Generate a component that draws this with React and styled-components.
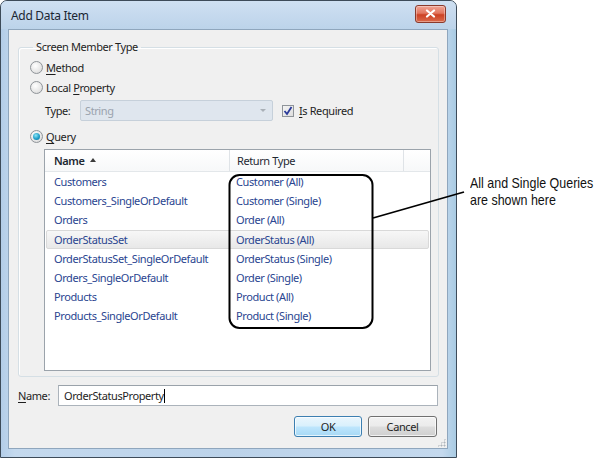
import React from "react";
import styled, { createGlobalStyle } from "styled-components";

const GlobalStyle = createGlobalStyle`
  html, body {
    margin: 0;
    padding: 0;
    background: #ffffff;
  }
  body {
    font-family: "Noto Sans", "Open Sans", sans-serif;
    letter-spacing: -0.3px;
  }
`;

const Page = styled.div`
  position: relative;
  display: flex;
  align-items: flex-start;
  width: 600px;
  height: 458px;
  overflow: hidden;
  background: #ffffff;
`;

const Window = styled.div`
  display: flex;
  flex-direction: column;
  width: 459px;
  height: 458px;
  box-sizing: border-box;
  border: 1px solid #3d4b59;
  border-radius: 7px 7px 0 0;
  background: linear-gradient(90deg, #b3cde8 0%, #c4d9ee 3%, #bcd3ea 50%, #c4d9ee 97%, #a9cbe3 100%);
  padding: 0 8px 8px 7px;
`;

const TitleBar = styled.div`
  display: flex;
  align-items: center;
  justify-content: space-between;
  height: 28px;
  margin: 0 -8px 0 -7px;
  padding: 0 10px;
  background: linear-gradient(#cfe0f2, #bcd3ea);
  border-radius: 6px 6px 0 0;
`;

const Title = styled.span`
  font-size: 12px;
  color: #1b2633;
`;

const CloseButton = styled.div`
  display: flex;
  align-items: center;
  justify-content: center;
  width: 29px;
  height: 16px;
  margin-top: -3px;
  border: 1px solid #8a3a2c;
  border-radius: 3px;
  background: linear-gradient(#f0a596 0%, #e2765f 45%, #cc4124 55%, #db6a4c 100%);
  box-shadow: inset 0 0 0 1px rgba(255, 255, 255, 0.35);
`;

const Client = styled.div`
  flex: 1;
  display: flex;
  flex-direction: column;
  background: #f0f0f0;
  border: 1px solid #8fa6bd;
  padding: 10px 8px 0 9px;
  font-size: 11px;
  letter-spacing: -0.4px;
`;

const Group = styled.fieldset`
  margin: 0;
  padding: 3px 7px 5px 11px;
  border: 1px solid #d5dfe5;
  border-radius: 3px;
  box-shadow: inset 1px 1px 0 #ffffff;
`;

const Legend = styled.legend`
  margin-left: 3px;
  padding: 0 3px;
  line-height: 14px;
  color: #1e1e1e;
`;

const OptionRow = styled.label`
  display: flex;
  align-items: center;
  gap: 3px;
  height: 20px;
  margin-top: ${(p) => p.$top || 0}px;
  color: #1e1e1e;
`;

const Radio = styled.span`
  position: relative;
  width: 11px;
  height: 11px;
  border-radius: 50%;
  border: 1px solid #8f9499;
  background: radial-gradient(circle at 40% 35%, #ffffff 0%, #e6e6e6 60%, #cfcfcf 100%);
  flex: none;
  &::after {
    content: "";
    display: ${(p) => (p.$checked ? "block" : "none")};
    position: absolute;
    left: 2px;
    top: 2px;
    width: 7px;
    height: 7px;
    border-radius: 50%;
    background: radial-gradient(circle at 40% 35%, #8ee6f6 0%, #1f9ec8 55%, #0b6c98 100%);
  }
`;

const Key = styled.span`
  text-decoration: underline;
  text-underline-offset: 2px;
`;

const TypeRow = styled.div`
  display: flex;
  align-items: center;
  height: 21px;
  margin: 3px 0 0 15px;
  color: #1e1e1e;
`;

const TypeLabel = styled.span`
  width: 35px;
`;

const Combo = styled.div`
  display: flex;
  align-items: center;
  justify-content: space-between;
  box-sizing: border-box;
  width: 193px;
  height: 21px;
  padding: 0 6px 0 4px;
  border: 1px solid #c6d0da;
  border-radius: 2px;
  background: #dfe6ee;
  color: #9aa3ad;
`;

const ComboArrow = styled.span`
  width: 0;
  height: 0;
  border-left: 3px solid transparent;
  border-right: 3px solid transparent;
  border-top: 3px solid #a9b0b7;
`;

const CheckRow = styled.label`
  display: flex;
  align-items: center;
  gap: 5px;
  margin-left: 9px;
`;

const CheckBox = styled.span`
  display: flex;
  align-items: center;
  justify-content: center;
  box-sizing: border-box;
  width: 12px;
  height: 12px;
  border: 1px solid #8f9499;
  background: linear-gradient(135deg, #f4f4f4, #dedede);
`;

const List = styled.div`
  display: flex;
  flex-direction: column;
  margin: 3px 0 0 14px;
  height: 222px;
  box-sizing: border-box;
  border: 1px solid #9ba3ab;
  background: #ffffff;
`;

const Header = styled.div`
  display: flex;
  height: 21px;
  border-bottom: 1px solid #e3e7ea;
  background: linear-gradient(#ffffff, #f7f8f9);
`;

const HeadCell = styled.div`
  display: flex;
  align-items: center;
  gap: 5px;
  box-sizing: border-box;
  width: ${(p) => p.$w}px;
  padding-left: ${(p) => p.$pad || 0}px;
  border-right: ${(p) => (p.$last ? "none" : "1px solid #dfe3e7")};
  font-weight: ${(p) => (p.$bold ? 600 : 400)};
  color: #1e2832;
`;

const SortArrow = styled.span`
  width: 0;
  height: 0;
  border-left: 3px solid transparent;
  border-right: 3px solid transparent;
  border-bottom: 4px solid #3c3c3c;
  margin-top: -1px;
`;

const Rows = styled.div`
  display: flex;
  flex-direction: column;
  padding: 0 1px;
`;

const Row = styled.div`
  display: flex;
  align-items: center;
  box-sizing: border-box;
  height: 19.2px;
  border: 1px solid ${(p) => (p.$selected ? "#d9d9d9" : "transparent")};
  border-radius: 2px;
  background: ${(p) => (p.$selected ? "linear-gradient(#f7f7f7, #e8e8e8)" : "transparent")};
  color: #2a4590;
`;

const Cell = styled.span`
  box-sizing: border-box;
  width: ${(p) => p.$w}px;
  padding-left: ${(p) => p.$pad}px;
  white-space: nowrap;
`;

const NameRow = styled.div`
  display: flex;
  align-items: center;
  margin-top: 8px;
  color: #1e1e1e;
`;

const NameLabel = styled.span`
  width: 40px;
`;

const TextBox = styled.div`
  display: flex;
  align-items: center;
  box-sizing: border-box;
  width: 380px;
  height: 21px;
  padding-left: 5px;
  border: 1px solid #abb3bb;
  border-top-color: #9aa2aa;
  background: #ffffff;
  color: #1e1e1e;
`;

const Caret = styled.span`
  display: inline-block;
  width: 1px;
  height: 14px;
  background: #000000;
`;

const Buttons = styled.div`
  display: flex;
  justify-content: flex-end;
  gap: 6px;
  margin-top: 10px;
  padding-right: 2px;
`;

const Button = styled.div`
  display: flex;
  align-items: center;
  justify-content: center;
  box-sizing: border-box;
  width: ${(p) => p.$w}px;
  height: 21px;
  border: 1px solid ${(p) => (p.$default ? "#3c7fb1" : "#707070")};
  border-radius: 3px;
  background: ${(p) =>
    p.$default
      ? "linear-gradient(#eaf6fd 0%, #d9f0fc 48%, #bee6fd 52%, #a7d9f5 100%)"
      : "linear-gradient(#f2f2f2 0%, #ebebeb 48%, #dddddd 52%, #cfcfcf 100%)"};
  box-shadow: inset 0 0 0 1px rgba(255, 255, 255, 0.7);
  color: #1e1e1e;
`;

const Grip = styled.div`
  align-self: flex-end;
  width: 9px;
  height: 9px;
  margin: 1px -7px 0 0;
  background-image: radial-gradient(circle, #aeb4ba 0.9px, transparent 1.1px);
  background-size: 3px 3px;
  clip-path: polygon(100% 0, 100% 100%, 0 100%);
`;

const Callout = styled.div`
  margin: 174px 0 0 13px;
  font-family: "Liberation Sans", "Roboto", sans-serif;
  font-size: 15px;
  line-height: 17px;
  letter-spacing: 0;
  color: #111111;
  white-space: nowrap;
  transform: scaleX(0.83);
  transform-origin: left top;
`;

const Overlay = styled.svg`
  position: absolute;
  left: 0;
  top: 0;
  pointer-events: none;
`;

const items = [
  ["Customers", "Customer (All)"],
  ["Customers_SingleOrDefault", "Customer (Single)"],
  ["Orders", "Order (All)"],
  ["OrderStatusSet", "OrderStatus (All)"],
  ["OrderStatusSet_SingleOrDefault", "OrderStatus (Single)"],
  ["Orders_SingleOrDefault", "Order (Single)"],
  ["Products", "Product (All)"],
  ["Products_SingleOrDefault", "Product (Single)"],
];

export default function App() {
  return (
    <Page>
      <GlobalStyle />
      <Window>
        <TitleBar>
          <Title>Add Data Item</Title>
          <CloseButton>
            <svg width="11" height="9" viewBox="0 0 11 9">
              <path d="M2 1.5 L9 7.5 M9 1.5 L2 7.5" stroke="#ffffff" strokeWidth="2.2" strokeLinecap="round" />
            </svg>
          </CloseButton>
        </TitleBar>
        <Client>
          <Group>
            <Legend>Screen Member Type</Legend>
            <OptionRow>
              <Radio />
              <span>
                <Key>M</Key>ethod
              </span>
            </OptionRow>
            <OptionRow>
              <Radio />
              <span>
                Local <Key>P</Key>roperty
              </span>
            </OptionRow>
            <TypeRow>
              <TypeLabel>Type:</TypeLabel>
              <Combo>
                <span>String</span>
                <ComboArrow />
              </Combo>
              <CheckRow>
                <CheckBox>
                  <svg width="10" height="10" viewBox="0 0 10 10">
                    <path d="M1.5 5 L4 8 L8.5 1" fill="none" stroke="#2a3a9a" strokeWidth="1.8" />
                  </svg>
                </CheckBox>
                <span>
                  <Key>I</Key>s Required
                </span>
              </CheckRow>
            </TypeRow>
            <OptionRow $top={5}>
              <Radio $checked />
              <span>
                <Key>Q</Key>uery
              </span>
            </OptionRow>
            <List>
              <Header>
                <HeadCell $w={185} $pad={9} $bold>
                  Name <SortArrow />
                </HeadCell>
                <HeadCell $w={174} $pad={7}>
                  Return Type
                </HeadCell>
                <HeadCell $w={26} $last />
              </Header>
              <Rows>
                {items.map(([name, type]) => (
                  <Row key={name} $selected={name === "OrderStatusSet"}>
                    <Cell $w={183} $pad={7}>
                      {name}
                    </Cell>
                    <Cell $w={170} $pad={6}>
                      {type}
                    </Cell>
                  </Row>
                ))}
              </Rows>
            </List>
          </Group>
          <NameRow>
            <NameLabel>
              <Key>N</Key>ame:
            </NameLabel>
            <TextBox>
              OrderStatusProperty
              <Caret />
            </TextBox>
          </NameRow>
          <Buttons>
            <Button $w={68} $default>
              OK
            </Button>
            <Button $w={69}>Cancel</Button>
          </Buttons>
          <Grip />
        </Client>
      </Window>
      <Callout>
        All and Single Queries
        <br />
        are shown here
      </Callout>
      <Overlay width="600" height="458">
        <rect x="229.5" y="175" width="143" height="153" rx="10" fill="none" stroke="#000000" strokeWidth="2" />
        <line x1="373" y1="218" x2="464" y2="192" stroke="#000000" strokeWidth="1.8" />
      </Overlay>
    </Page>
  );
}
